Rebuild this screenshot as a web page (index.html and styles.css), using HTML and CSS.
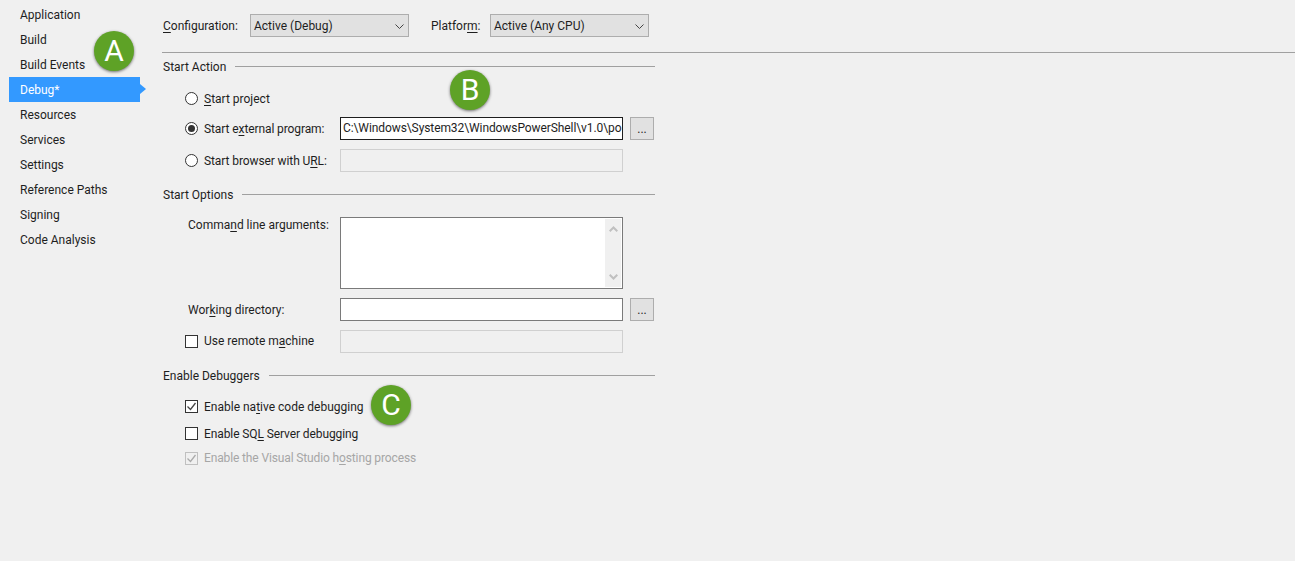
FILE: index.html
```html
<!DOCTYPE html>
<html lang="en">
<head>
<meta charset="utf-8">
<title>Debug properties</title>
<link rel="stylesheet" href="styles.css">
</head>
<body>
<nav class="nav">
  <a class="nav-item">Application</a>
  <a class="nav-item">Build</a>
  <a class="nav-item">Build Events</a>
  <a class="nav-item active">Debug*</a>
  <a class="nav-item">Resources</a>
  <a class="nav-item">Services</a>
  <a class="nav-item">Settings</a>
  <a class="nav-item">Reference Paths</a>
  <a class="nav-item">Signing</a>
  <a class="nav-item">Code Analysis</a>
</nav>
<main class="main">
  <div class="toolbar">
    <span class="tool-label"><u>C</u>onfiguration:</span>
    <div class="select">Active (Debug)<svg class="chev" width="9" height="5" viewBox="0 0 9 5"><path d="M.5.5l4 4 4-4" fill="none" stroke="#444" stroke-width="1"/></svg></div>
    <span class="tool-label platform">Platfor<u>m</u>:</span>
    <div class="select">Active (Any CPU)<svg class="chev" width="9" height="5" viewBox="0 0 9 5"><path d="M.5.5l4 4 4-4" fill="none" stroke="#444" stroke-width="1"/></svg></div>
  </div>

  <section class="section">
    <h2 class="heading"><span>Start Action</span></h2>
    <div class="row r-a1">
      <label class="opt"><svg class="mark" width="13" height="13" viewBox="0 0 13 13"><circle cx="6.5" cy="6.5" r="6" fill="#fff" stroke="#333"/></svg><span><u>S</u>tart project</span></label>
    </div>
    <div class="row r-a2">
      <label class="opt"><svg class="mark" width="13" height="13" viewBox="0 0 13 13"><circle cx="6.5" cy="6.5" r="6" fill="#fff" stroke="#333"/><circle cx="6.5" cy="6.5" r="3.5" fill="#333"/></svg><span class="tight">Start e<u>x</u>ternal program:</span></label>
      <div class="field active-field">C:\Windows\System32\WindowsPowerShell\v1.0\po</div>
      <button class="browse">...</button>
    </div>
    <div class="row r-a3">
      <label class="opt"><svg class="mark" width="13" height="13" viewBox="0 0 13 13"><circle cx="6.5" cy="6.5" r="6" fill="#fff" stroke="#333"/></svg><span class="tight">Start browser with U<u>R</u>L:</span></label>
      <div class="field disabled"></div>
    </div>
  </section>

  <section class="section s-options">
    <h2 class="heading"><span>Start Options</span></h2>
    <div class="row r-o1">
      <span class="plain">Comma<u>n</u>d line arguments:</span>
      <div class="field area">
        <div class="scroll">
          <svg width="9" height="6" viewBox="0 0 9 6"><path d="M.7 5.300l3.800-3.800 3.800 3.800" fill="none" stroke="#c0c0c0" stroke-width="2"/></svg>
          <svg width="9" height="6" viewBox="0 0 9 6"><path d="M.7.700l3.800 3.800 3.800-3.800" fill="none" stroke="#c0c0c0" stroke-width="2"/></svg>
        </div>
      </div>
    </div>
    <div class="row r-o2">
      <span class="plain">Wor<u>k</u>ing directory:</span>
      <div class="field dark"></div>
      <button class="browse">...</button>
    </div>
    <div class="row r-o3">
      <label class="opt"><svg class="mark" width="13" height="13" viewBox="0 0 13 13"><rect x=".5" y=".5" width="12" height="12" fill="#fff" stroke="#333"/></svg><span class="raise">Use remote m<u>a</u>chine</span></label>
      <div class="field disabled"></div>
    </div>
  </section>

  <section class="section s-debuggers">
    <h2 class="heading"><span>Enable Debuggers</span></h2>
    <div class="check c1">
      <label class="opt"><svg class="mark lift" width="13" height="13" viewBox="0 0 13 13"><rect x=".5" y=".5" width="12" height="12" fill="#fff" stroke="#333"/><path d="M2.500 6.500l3 3 5-6.500" fill="none" stroke="#444" stroke-width="1.300"/></svg><span>Enable na<u>t</u>ive code debugging</span></label>
    </div>
    <div class="check c2">
      <label class="opt"><svg class="mark lift" width="13" height="13" viewBox="0 0 13 13"><rect x=".5" y=".5" width="12" height="12" fill="#fff" stroke="#333"/></svg><span class="tight">Enable SQ<u>L</u> Server debugging</span></label>
    </div>
    <div class="check c3">
      <label class="opt off"><svg class="mark" width="13" height="13" viewBox="0 0 13 13"><rect x=".5" y=".5" width="12" height="12" fill="#f0f0f0" stroke="#c0c0c0"/><path d="M2.500 6.500l3 3 5-6.500" fill="none" stroke="#aaa" stroke-width="1.300"/></svg><span class="narrow">Enable the Visual Studio h<u>o</u>sting process</span></label>
    </div>
  </section>
</main>
<div class="badge badge-a">A</div>
<div class="badge badge-b">B</div>
<div class="badge badge-c">C</div>
</body>
</html>
```

FILE: styles.css
```css
* { box-sizing: border-box; }
html, body { height: 100%; }
body {
  margin: 0;
  background: #f0f0f0;
  color: #1e1e1e;
  font: 12px/16px Roboto, "Noto Sans", sans-serif;
  display: flex;
  overflow: hidden;
  position: relative;
}
u { text-decoration-thickness: 1px; text-underline-offset: 2px; }

.nav { width: 162px; flex: none; padding: 2px 0 0 9px; }
.nav-item {
  display: block;
  width: 131px;
  height: 25px;
  line-height: 27px;
  padding-left: 11px;
  position: relative;
}
.nav-item.active { background: #3399ff; color: #fff; }
.nav-item.active::after {
  content: "";
  position: absolute;
  left: 100%;
  top: 7px;
  border-left: 6px solid #3399ff;
  border-top: 5.5px solid transparent;
  border-bottom: 5.5px solid transparent;
}

.main { flex: 1; padding-top: 14px; min-width: 0; }

.toolbar {
  display: flex;
  align-items: center;
  height: 39px;
  padding: 0 0 16px 1px;
  border-bottom: 1px solid #a0a0a0;
}
.tool-label { width: 87px; padding-top: 2px; }
.tool-label.platform { width: 59px; margin-left: 22px; }
.select {
  width: 159px;
  height: 23px;
  background: #e1e1e1;
  border: 1px solid #adadad;
  padding: 2px 3px 0;
  line-height: 19px;
  display: flex;
  justify-content: space-between;
  align-items: center;
}
.chev { margin-right: 1px; }

.section { width: 493px; }
.heading {
  display: flex;
  align-items: center;
  gap: 9px;
  margin: 6px 0 0;
  padding-left: 1px;
  height: 16px;
  font: inherit;
}
.heading::after { content: ""; flex: 1; height: 1px; margin-bottom: 2px; background: #a0a0a0; }

.row { display: flex; align-items: center; height: 23px; padding-left: 23px; position: relative; }
.r-a1 { margin-top: 12px; }
.r-a2 { margin-top: 7px; }
.r-a3 { margin-top: 9px; }
.s-options { margin-top: 15px; }
.r-o1 { margin-top: 14px; height: 72px; align-items: flex-start; padding-left: 26px; }
.r-o2 { margin-top: 9px; padding-left: 26px; }
.r-o3 { margin-top: 9px; }
.s-debuggers { margin-top: 15px; }

.opt { display: flex; align-items: center; width: 155px; flex: none; white-space: nowrap; }
.mark { margin-right: 6px; flex: none; }
.mark.lift { margin-top: -2px; }
.opt.off { color: #a6a6a6; }
.tight { letter-spacing: -.1px; }
.narrow { letter-spacing: -.13px; }
.raise { padding-bottom: 2px; }
.plain { width: 152px; flex: none; }

.field {
  width: 283px;
  height: 23px;
  flex: none;
  background: #f0f0f0;
  border: 1px solid #d0d0d0;
  overflow: hidden;
  white-space: nowrap;
  padding: 0 2px;
  line-height: 21px;
}
.active-field { background: #fff; border-color: #1e1e1e; letter-spacing: -.09px; }
.dark { background: #fff; border-color: #7a7a7a; }
.area { height: 72px; background: #fff; border-color: #7a7a7a; padding: 0; display: flex; justify-content: flex-end; }
.scroll {
  width: 16px;
  margin: 1px;
  background: #f0f0f0;
  display: flex;
  flex-direction: column;
  justify-content: space-between;
  align-items: center;
  padding: 7px 0;
}
.browse {
  width: 24px;
  height: 23px;
  margin-left: 7px;
  flex: none;
  background: #e1e1e1;
  border: 1px solid #adadad;
  padding: 0;
  font: inherit;
  color: inherit;
}

.check { padding-left: 23px; display: flex; align-items: center; height: 16px; }
.c1 { margin-top: 15px; }
.c2 { margin-top: 11px; }
.c3 { margin-top: 8px; }

.badge {
  position: absolute;
  width: 40px;
  height: 40px;
  border-radius: 50%;
  background: #5ea226;
  color: #fff;
  box-shadow: 0 1px 3px rgba(0, 0, 0, .55);
  font: 400 30px/39px Roboto, sans-serif;
  text-align: center;
}
.badge-a { left: 94px; top: 31px; }
.badge-b { left: 450px; top: 70px; }
.badge-c { left: 371px; top: 385px; }
```
